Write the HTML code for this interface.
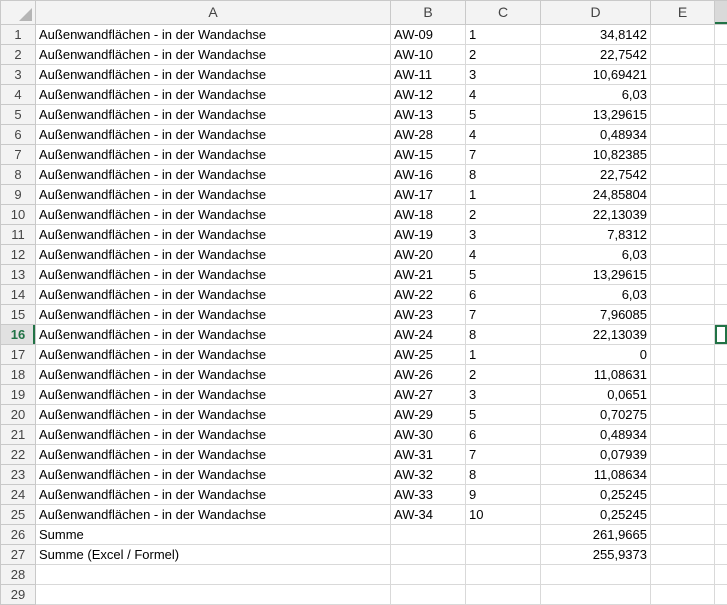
<!DOCTYPE html>
<html><head><style>
body{margin:0;background:#fff;width:727px;height:596px;overflow:hidden;font-family:"Liberation Sans",sans-serif;font-size:13px;color:#000}
table{border-collapse:collapse;table-layout:fixed;position:absolute;left:0;top:0;width:727px}
td{border:1px solid #d9d9d9;height:19px;padding:0 3px;white-space:nowrap;overflow:hidden;line-height:19px;box-sizing:border-box}
tr.h td{background:#f3f3f3;border-color:#c9c9c9;height:24px;text-align:center;color:#444;font-size:14px}
td.rh{background:#f3f3f3;border-color:#c9c9c9;text-align:center;color:#444;padding:0}
td.r{text-align:right}
tr.sel td.rh{background:#e1e1e1;color:#217346;font-weight:bold;box-shadow:inset -2px 0 0 #217346}
</style></head><body>
<table>
<colgroup><col style="width:35px"><col style="width:355px"><col style="width:75px"><col style="width:75px"><col style="width:110px"><col style="width:64px"><col style="width:13px"></colgroup>
<tr class="h"><td style="padding:0;position:relative"><div style="position:absolute;right:3px;bottom:3px;width:0;height:0;border-left:13px solid transparent;border-bottom:13px solid #b5b5b5"></div></td><td>A</td><td>B</td><td>C</td><td>D</td><td>E</td><td style="background:#d9d9d9;box-shadow:inset 0 -2px 0 #217346"></td></tr>
<tr><td class="rh">1</td><td>Außenwandflächen - in der Wandachse</td><td>AW-09</td><td>1</td><td class="r">34,8142</td><td></td><td></td></tr>
<tr><td class="rh">2</td><td>Außenwandflächen - in der Wandachse</td><td>AW-10</td><td>2</td><td class="r">22,7542</td><td></td><td></td></tr>
<tr><td class="rh">3</td><td>Außenwandflächen - in der Wandachse</td><td>AW-11</td><td>3</td><td class="r">10,69421</td><td></td><td></td></tr>
<tr><td class="rh">4</td><td>Außenwandflächen - in der Wandachse</td><td>AW-12</td><td>4</td><td class="r">6,03</td><td></td><td></td></tr>
<tr><td class="rh">5</td><td>Außenwandflächen - in der Wandachse</td><td>AW-13</td><td>5</td><td class="r">13,29615</td><td></td><td></td></tr>
<tr><td class="rh">6</td><td>Außenwandflächen - in der Wandachse</td><td>AW-28</td><td>4</td><td class="r">0,48934</td><td></td><td></td></tr>
<tr><td class="rh">7</td><td>Außenwandflächen - in der Wandachse</td><td>AW-15</td><td>7</td><td class="r">10,82385</td><td></td><td></td></tr>
<tr><td class="rh">8</td><td>Außenwandflächen - in der Wandachse</td><td>AW-16</td><td>8</td><td class="r">22,7542</td><td></td><td></td></tr>
<tr><td class="rh">9</td><td>Außenwandflächen - in der Wandachse</td><td>AW-17</td><td>1</td><td class="r">24,85804</td><td></td><td></td></tr>
<tr><td class="rh">10</td><td>Außenwandflächen - in der Wandachse</td><td>AW-18</td><td>2</td><td class="r">22,13039</td><td></td><td></td></tr>
<tr><td class="rh">11</td><td>Außenwandflächen - in der Wandachse</td><td>AW-19</td><td>3</td><td class="r">7,8312</td><td></td><td></td></tr>
<tr><td class="rh">12</td><td>Außenwandflächen - in der Wandachse</td><td>AW-20</td><td>4</td><td class="r">6,03</td><td></td><td></td></tr>
<tr><td class="rh">13</td><td>Außenwandflächen - in der Wandachse</td><td>AW-21</td><td>5</td><td class="r">13,29615</td><td></td><td></td></tr>
<tr><td class="rh">14</td><td>Außenwandflächen - in der Wandachse</td><td>AW-22</td><td>6</td><td class="r">6,03</td><td></td><td></td></tr>
<tr><td class="rh">15</td><td>Außenwandflächen - in der Wandachse</td><td>AW-23</td><td>7</td><td class="r">7,96085</td><td></td><td></td></tr>
<tr class="sel"><td class="rh">16</td><td>Außenwandflächen - in der Wandachse</td><td>AW-24</td><td>8</td><td class="r">22,13039</td><td></td><td style="box-shadow:inset 0 0 0 2px #217346"></td></tr>
<tr><td class="rh">17</td><td>Außenwandflächen - in der Wandachse</td><td>AW-25</td><td>1</td><td class="r">0</td><td></td><td></td></tr>
<tr><td class="rh">18</td><td>Außenwandflächen - in der Wandachse</td><td>AW-26</td><td>2</td><td class="r">11,08631</td><td></td><td></td></tr>
<tr><td class="rh">19</td><td>Außenwandflächen - in der Wandachse</td><td>AW-27</td><td>3</td><td class="r">0,0651</td><td></td><td></td></tr>
<tr><td class="rh">20</td><td>Außenwandflächen - in der Wandachse</td><td>AW-29</td><td>5</td><td class="r">0,70275</td><td></td><td></td></tr>
<tr><td class="rh">21</td><td>Außenwandflächen - in der Wandachse</td><td>AW-30</td><td>6</td><td class="r">0,48934</td><td></td><td></td></tr>
<tr><td class="rh">22</td><td>Außenwandflächen - in der Wandachse</td><td>AW-31</td><td>7</td><td class="r">0,07939</td><td></td><td></td></tr>
<tr><td class="rh">23</td><td>Außenwandflächen - in der Wandachse</td><td>AW-32</td><td>8</td><td class="r">11,08634</td><td></td><td></td></tr>
<tr><td class="rh">24</td><td>Außenwandflächen - in der Wandachse</td><td>AW-33</td><td>9</td><td class="r">0,25245</td><td></td><td></td></tr>
<tr><td class="rh">25</td><td>Außenwandflächen - in der Wandachse</td><td>AW-34</td><td>10</td><td class="r">0,25245</td><td></td><td></td></tr>
<tr><td class="rh">26</td><td>Summe</td><td></td><td></td><td class="r">261,9665</td><td></td><td></td></tr>
<tr><td class="rh">27</td><td>Summe (Excel / Formel)</td><td></td><td></td><td class="r">255,9373</td><td></td><td></td></tr>
<tr><td class="rh">28</td><td></td><td></td><td></td><td></td><td></td><td></td></tr>
<tr><td class="rh">29</td><td></td><td></td><td></td><td></td><td></td><td></td></tr>
</table>
</body></html>
